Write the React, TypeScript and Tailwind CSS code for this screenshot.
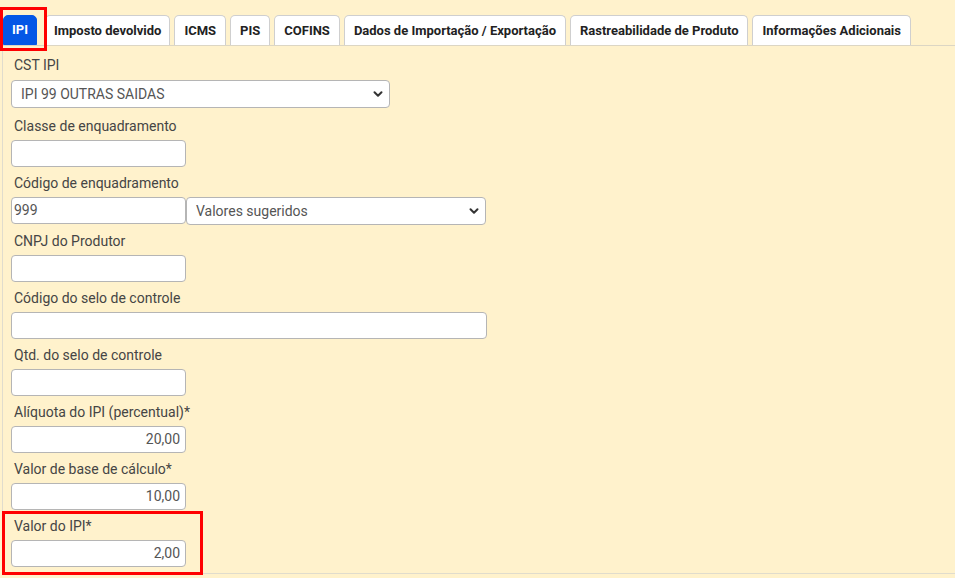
import React from 'react';

const tabs = [
  'IPI',
  'Imposto devolvido',
  'ICMS',
  'PIS',
  'COFINS',
  'Dados de Importação / Exportação',
  'Rastreabilidade de Produto',
  'Informações Adicionais',
];

function Chevron() {
  return (
    <svg width="10" height="10" viewBox="0 0 10 10" className="shrink-0">
      <path d="M1.5 3.2 L5 6.7 L8.5 3.2" fill="none" stroke="#333" strokeWidth="2" strokeLinecap="round" strokeLinejoin="round" />
    </svg>
  );
}

function Select({ value, width }: { value: string; width: string }) {
  return (
    <div
      className={`${width} h-[28px] flex items-center justify-between pl-[9px] pr-[6px] bg-white border border-[#b5b5b5] rounded-[4px] text-[14px] text-[#555]`}
    >
      <span>{value}</span>
      <Chevron />
    </div>
  );
}

function Input({ value = '', width = 'w-[175px]', right = false }: { value?: string; width?: string; right?: boolean }) {
  return (
    <div
      className={`${width} h-[27px] flex items-center bg-white border border-[#b5b5b5] rounded-[4px] text-[14px] text-[#555] ${
        right ? 'justify-end pr-[5px]' : 'pl-[2px]'
      }`}
    >
      {value}
    </div>
  );
}

function Field({ label, children, first = false }: { label: string; children: React.ReactNode; first?: boolean }) {
  return (
    <div className={first ? 'mb-[8px]' : 'mb-[6px]'}>
      <div className={`pl-[3px] leading-[20px] text-[14px] text-[#454545] ${first ? 'mb-[5px]' : 'mb-[4px]'}`}>
        {label}
      </div>
      {children}
    </div>
  );
}

export default function App() {
  return (
    <div className="relative w-[955px] h-[578px] overflow-hidden bg-[#fff2cc] font-['Roboto','Liberation_Sans',sans-serif]">
      <div className="pt-[15px] pl-[3px] flex gap-[4px] border-b border-[#dcd6c4]">
        {tabs.map((t, i) => (
          <div
            key={t}
            className={`h-[30px] flex items-center rounded-t-[5px] text-[13px] font-bold ${
              i === 0
                ? 'bg-[#0457e6] text-white border border-[#0457e6] px-[8px] mr-[4px]'
                : i === 1
                  ? 'bg-white text-[#222] border border-b-0 border-[#cfcfcf] px-[8px]'
                  : 'bg-white text-[#222] border border-b-0 border-[#cfcfcf] px-[9px]'
            }`}
          >
            {t}
          </div>
        ))}
      </div>

      <div className="ml-[2px] h-[528px] pl-[8px] pt-[9px] border-l border-b border-[#e0dccd]">
        <Field label="CST IPI" first>
          <Select value="IPI 99 OUTRAS SAIDAS" width="w-[379px]" />
        </Field>
        <Field label="Classe de enquadramento">
          <Input />
        </Field>
        <Field label="Código de enquadramento">
          <div className="flex">
            <Input value="999" />
            <Select value="Valores sugeridos" width="w-[300px]" />
          </div>
        </Field>
        <Field label="CNPJ do Produtor">
          <Input />
        </Field>
        <Field label="Código do selo de controle">
          <Input width="w-[476px]" />
        </Field>
        <Field label="Qtd. do selo de controle">
          <Input />
        </Field>
        <Field label="Alíquota do IPI (percentual)*">
          <Input value="20,00" right />
        </Field>
        <Field label="Valor de base de cálculo*">
          <Input value="10,00" right />
        </Field>
        <Field label="Valor do IPI*">
          <Input value="2,00" right />
        </Field>
      </div>

      <div className="absolute left-0 top-[7px] w-[47px] h-[44px] border-[3px] border-[#f00]" />
      <div className="absolute left-[2px] top-[511px] w-[201px] h-[64px] border-[3px] border-[#f00]" />
    </div>
  );
}
